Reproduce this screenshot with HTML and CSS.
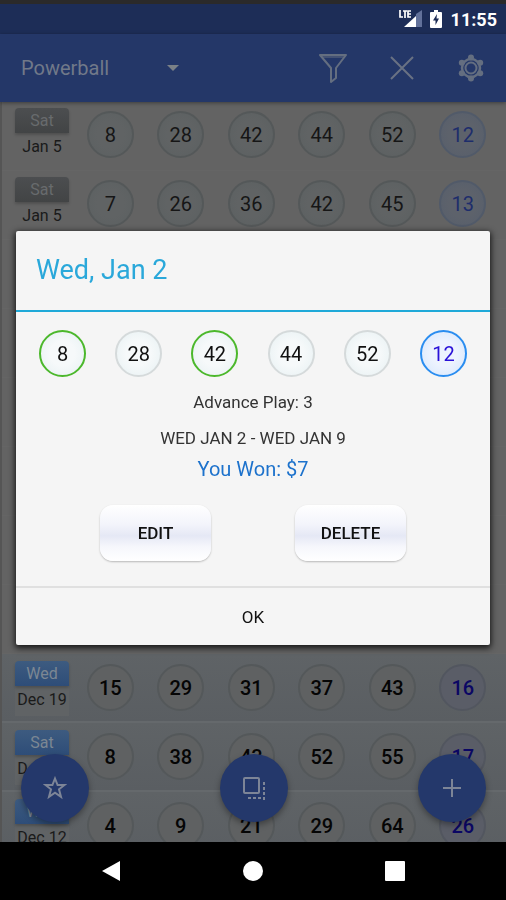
FILE: index.html
```html
<!DOCTYPE html>
<html lang="en">
	<head>
		<meta charset="UTF-8" />
		<meta name="viewport" content="width=device-width, initial-scale=1.0" />
		<title>Powerball</title>
		<link rel="stylesheet" href="styles.css">
	</head>
	<body>
		<div class="app">
			<!-- Status bar -->
			<div class="status">
				<svg class="signal" width="24" height="20" viewBox="0 0 24 20">
					<path d="M18 5L24 1V18H18Z" fill="#62719a" />
					<path d="M6 18L18 7V18Z" fill="#fff" />
					<path d="M2 1V8H5M5 2H9M7 2V9M13 2H10V8H13M10 5H13" fill="none" stroke="#fff" stroke-width="1.700" />
				</svg>
				<svg class="battery" width="12" height="18" viewBox="0 0 12 18">
					<path d="M4 0H8V2H11Q12 2 12 3V17Q12 18 11 18H1Q0 18 0 17V3Q0 2 1 2H4Z" fill="#fff" />
					<path d="M7 4L3 10.500H5.500V15L9 8.500H6.500Z" fill="#1b2a54" />
				</svg>
				<span class="time">11:55</span>
			</div>

			<!-- App bar -->
			<header class="appbar">
				<label class="game">
					<select aria-label="Game">
						<option>Powerball</option>
					</select>
					<span class="caret"></span>
				</label>
				<button class="icon-btn" aria-label="Filter">
					<svg width="30" height="30" viewBox="0 0 30 30" fill="none" stroke="#646e80" stroke-width="2" stroke-linejoin="round">
						<path d="M2 2H28L18 15V25L13 29V15Z" />
						<path d="M4 4H26" stroke-width="1" />
					</svg>
				</button>
				<button class="icon-btn" aria-label="Clear">
					<svg width="24" height="24" viewBox="0 0 24 24" fill="none" stroke="#697283" stroke-width="2">
						<path d="M1 1L23 23M23 1L1 23" />
					</svg>
				</button>
				<button class="icon-btn" aria-label="Settings">
					<svg width="28" height="28" viewBox="0 0 28 28" fill="none" stroke="#646e80">
						<circle cx="14" cy="14" r="9" stroke-width="2.500" />
						<circle cx="14" cy="14" r="5.500" stroke-width="2" />
						<g fill="#646e80" stroke="none">
							<circle cx="14" cy="3.500" r="3" />
							<circle cx="14" cy="24.500" r="3" />
							<circle cx="4.800" cy="8.700" r="3" />
							<circle cx="23.200" cy="8.700" r="3" />
							<circle cx="4.800" cy="19.300" r="3" />
							<circle cx="23.200" cy="19.300" r="3" />
						</g>
					</svg>
				</button>
			</header>

			<!-- Tickets -->
			<main class="list">
				<ul class="rows">
					<li class="row">
						<div class="date"><span class="day">Sat</span><span>Jan 5</span></div>
						<div class="balls"><b>8</b><b>28</b><b>42</b><b>44</b><b>52</b><b class="power">12</b></div>
					</li>
					<li class="row">
						<div class="date"><span class="day">Sat</span><span>Jan 5</span></div>
						<div class="balls"><b>7</b><b>26</b><b>36</b><b>42</b><b>45</b><b class="power">13</b></div>
					</li>
					<li class="row"></li>
					<li class="row"></li>
					<li class="row"></li>
					<li class="row"></li>
					<li class="row"></li>
					<li class="row"></li>
					<li class="row past">
						<div class="date"><span class="day">Wed</span><span>Dec 19</span></div>
						<div class="balls"><b>15</b><b>29</b><b>31</b><b>37</b><b>43</b><b class="power">16</b></div>
					</li>
					<li class="row past">
						<div class="date"><span class="day">Sat</span><span>Dec 15</span></div>
						<div class="balls"><b>8</b><b>38</b><b>43</b><b>52</b><b>55</b><b class="power">17</b></div>
					</li>
					<li class="row past">
						<div class="date"><span class="day">Wed</span><span>Dec 12</span></div>
						<div class="balls"><b>4</b><b>9</b><b>21</b><b>29</b><b>64</b><b class="power">26</b></div>
					</li>
				</ul>

				<div class="fabs">
					<button class="fab" aria-label="Favorites">
						<svg width="24" height="24" viewBox="0 0 24 24" fill="none" stroke="#7d8597" stroke-width="2">
							<path d="M12 2.500L14.600 9H21.500L16 13.300L18 20.800L12 16.700L6 20.800L8 13.300L2.500 9H9.400Z" />
						</svg>
					</button>
					<button class="fab" aria-label="Copy">
						<svg width="24" height="24" viewBox="0 0 24 24" fill="none" stroke="#7d8597" stroke-width="2">
							<rect x="2" y="2" width="15" height="15" rx="1" />
							<path d="M22 6V24M6 22H22" stroke-dasharray="3 2" />
						</svg>
					</button>
					<button class="fab" aria-label="Add">
						<svg width="20" height="20" viewBox="0 0 20 20" fill="none" stroke="#7d8597" stroke-width="2">
							<path d="M10 1V19M1 10H19" />
						</svg>
					</button>
				</div>
			</main>

			<!-- Navigation -->
			<nav class="nav">
				<button aria-label="Back">
					<svg width="20" height="22" viewBox="0 0 20 22"><path d="M19 1V21L1 11Z" fill="#fff" /></svg>
				</button>
				<button aria-label="Home">
					<svg width="22" height="22" viewBox="0 0 22 22"><circle cx="11" cy="11" r="10" fill="#fff" /></svg>
				</button>
				<button aria-label="Recent">
					<svg width="20" height="20" viewBox="0 0 20 20"><rect width="20" height="20" rx="1" fill="#fff" /></svg>
				</button>
			</nav>
		</div>

		<!-- Ticket dialog -->
		<div class="overlay">
			<div class="dialog" role="dialog" aria-labelledby="dialog-title">
				<h2 id="dialog-title">Wed, Jan 2</h2>
				<div class="content">
					<div class="numbers">
						<b class="hit">8</b><b>28</b><b class="hit">42</b><b>44</b><b>52</b><b class="power">12</b>
					</div>
					<p class="advance">Advance Play: 3</p>
					<p class="range">WED JAN 2 - WED JAN 9</p>
					<p class="won">You Won: $7</p>
					<div class="actions">
						<button>EDIT</button>
						<button>DELETE</button>
					</div>
				</div>
				<button class="ok">OK</button>
			</div>
		</div>
	</body>
</html>
```
FILE: styles.css
```css
* {
	box-sizing: border-box;
}
body {
	margin: 0;
	font-family: Roboto, sans-serif;
	background: #000;
	color: #111;
}
button,
select {
	padding: 0;
	border: none;
	background: none;
	font-family: inherit;
	color: inherit;
}
svg {
	display: block;
}
.app {
	display: flex;
	flex-direction: column;
	height: 100vh;
	border-top: 4px solid #2b2a2a;
}

/* bars */
.status {
	display: flex;
	align-items: center;
	justify-content: flex-end;
	height: 30px;
	padding-right: 9px;
	background: #1d2d57;
	color: #fff;
}
.battery {
	margin: 0 9px 0 8px;
}
.time {
	font-size: 18px;
	font-weight: 700;
}
.appbar {
	display: flex;
	align-items: center;
	height: 68px;
	padding-right: 1px;
	padding-left: 21px;
	background: #243768;
	z-index: 1;
	box-shadow: 0 1px 4px rgba(0, 0, 0, 0.4);
}
.game {
	display: flex;
	align-items: center;
	width: 158px;
	margin-right: auto;
}
.game select {
	flex: 1;
	appearance: none;
	font-size: 20px;
	line-height: 26px;
	color: #717989;
}
.caret {
	border: 6px solid transparent;
	border-top-color: #7b8187;
	border-bottom: none;
}
.icon-btn {
	display: flex;
	justify-content: center;
	width: 69px;
}

/* ticket list */
.list {
	position: relative;
	flex: 1;
	min-height: 0;
	overflow: hidden;
	background: #636363;
	border-left: 2px solid #555;
}
.rows {
	margin: 0;
	padding: 0;
	list-style: none;
}
.row {
	display: flex;
	gap: 6px;
	height: 69px;
	padding: 6px 8px 0 13px;
	border-bottom: 1px solid #656565;
}
.past {
	padding-top: 7px;
	background: linear-gradient(#5f6366, #5a5e62);
	border-bottom: 2px solid #65696c;
}
.date {
	width: 54px;
	height: 55px;
	font-size: 16px;
	line-height: 27px;
	text-align: center;
	white-space: nowrap;
	color: #1a1a1a;
}
.past .date {
	background: #606365;
}
.date span {
	display: block;
}
.date .day {
	height: 25px;
	line-height: 25px;
	border-radius: 4px 4px 0 0;
	background: linear-gradient(#4c4e50, #424445);
	box-shadow: 0 2px 3px rgba(0, 0, 0, 0.2);
	color: #686b6d;
}
.past .day {
	background: linear-gradient(#3d5b80, #2e4d78);
	color: #7c8793;
}
.balls {
	flex: 1;
	display: grid;
	grid-template-columns: repeat(6, 1fr);
	justify-items: center;
	padding-top: 3px;
}
.balls b,
.numbers b {
	width: 47px;
	height: 47px;
	border: 2px solid #545859;
	border-radius: 50%;
	font-size: 20px;
	font-weight: 400;
	line-height: 44px;
	text-align: center;
}
.balls b {
	background: radial-gradient(#606364 45%, #5b6061);
	color: #161616;
}
.balls .power {
	background: radial-gradient(#5d626b 45%, #565e6c);
	border-color: #515a69;
	color: #1d2d6b;
}
.past .balls b {
	background: #5f6162;
	border-color: #54585a;
	font-weight: 500;
	color: #050505;
}
.past .balls .power {
	background: #5a5d67;
	border-color: #52565f;
	color: #0b0764;
}

/* floating buttons */
.fabs {
	position: absolute;
	left: 19px;
	right: 20px;
	bottom: 20px;
	display: flex;
	justify-content: space-between;
}
.fab {
	display: flex;
	align-items: center;
	justify-content: center;
	width: 68px;
	height: 68px;
	border-radius: 50%;
	background: #24386b;
	box-shadow: 0 3px 6px rgba(0, 0, 0, 0.35);
}

.nav {
	display: flex;
	justify-content: center;
	height: 58px;
	background: #000;
}
.nav button {
	display: flex;
	align-items: center;
	justify-content: center;
	width: 142px;
}

/* dialog */
.overlay {
	position: fixed;
	top: 34px;
	right: 0;
	bottom: 58px;
	left: 0;
	z-index: 2;
	display: flex;
	align-items: center;
	padding: 0 16px;
}
.dialog {
	flex: 1;
	background: #f5f5f5;
	border-radius: 2px;
	box-shadow: 0 2px 6px 1px rgba(0, 0, 0, 0.8);
}
.dialog h2 {
	margin: 0;
	padding: 0 20px;
	border-bottom: 2px solid #1fa9d8;
	font-size: 27px;
	font-weight: 400;
	line-height: 79px;
	color: #2aa8da;
}
.content {
	padding: 18px 23px 25px;
	text-align: center;
}
.numbers {
	display: flex;
	justify-content: space-between;
	margin-bottom: 13px;
}
.numbers b {
	border-color: #d5dadb;
	background: radial-gradient(#f6f9fa 40%, #e6f0f2);
	color: #111;
}
.numbers .hit {
	border-color: #4cb82c;
}
.numbers .power {
	border-color: #2a8df0;
	background: radial-gradient(#edf3fe 40%, #d5e6fc);
	color: #2a12d8;
}
.content p {
	margin: 0;
	line-height: 24px;
	color: #333;
}
.content .advance {
	margin-bottom: 12px;
	font-size: 17px;
}
.content .range {
	margin-bottom: 7px;
	font-size: 17px;
}
.content .won {
	font-size: 20px;
	color: #1d72cc;
}
.actions {
	display: flex;
	justify-content: center;
	gap: 84px;
	margin-top: 24px;
}
.actions button {
	width: 111px;
	height: 56px;
	border-radius: 13px;
	background: linear-gradient(#fff, #f3f4fb 35%, #e5e8f5 55%, #f6f7fc 75%, #fff);
	box-shadow: 0 1px 2px rgba(0, 0, 0, 0.25);
	font-size: 17px;
	font-weight: 500;
}
.ok {
	display: block;
	width: 100%;
	height: 59px;
	border-top: 2px solid #e0e0e0;
	font-size: 17px;
}
```
